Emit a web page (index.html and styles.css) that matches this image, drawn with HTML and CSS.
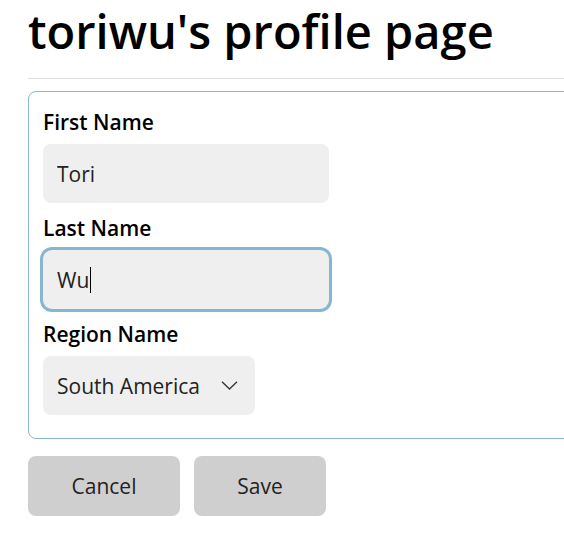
FILE: index.html
```html
<!DOCTYPE html>
<html lang="en">
<head>
<meta charset="utf-8">
<title>Profile</title>
<link rel="stylesheet" href="styles.css">
</head>
<body>
<main class="page">
  <h1 class="title">toriwu's profile page</h1>
  <hr class="rule">
  <form class="profile-form">
    <fieldset class="fields">
      <div class="group">
        <label class="label" for="first">First Name</label>
        <input class="field" id="first" type="text" value="Tori">
      </div>
      <div class="group">
        <label class="label" for="last">Last Name</label>
        <div class="field field-focus"><span>Wu</span><span class="caret"></span></div>
      </div>
      <div class="group">
        <label class="label" for="region">Region Name</label>
        <div class="select" id="region">
          <span>South America</span>
          <svg class="chev" width="17" height="9" viewBox="0 0 17 9"><path d="M1 0.8 L8.5 8 L16 0.8" fill="none" stroke="#333" stroke-width="1.3"/></svg>
        </div>
      </div>
    </fieldset>
    <div class="actions">
      <button type="button" class="btn btn-cancel">Cancel</button>
      <button type="button" class="btn btn-save">Save</button>
    </div>
  </form>
</main>
</body>
</html>
```
FILE: styles.css
```css
html, body {
  margin: 0;
  padding: 0;
  background: #fff;
  overflow: hidden;
}
body {
  font-family: "Open Sans", "Noto Sans", sans-serif;
  color: #111;
}
.page {
  width: 600px;
  padding: 0 0 0 28px;
}
.title {
  margin: 0;
  padding-top: 2px;
  font-size: 47px;
  font-weight: 600;
  line-height: 58px;
  color: #000;
  letter-spacing: 0;
}
.rule {
  margin: 18px 0 12px;
  border: 0;
  border-top: 1px solid #dcdcdc;
  width: 560px;
}
.profile-form {
  margin: 0;
}
.fields {
  margin: 0;
  border: 1px solid #8cb6cd;
  border-radius: 8px;
  padding: 17px 14px 23px;
  display: flex;
  flex-direction: column;
  gap: 12px;
  width: 560px;
  box-sizing: border-box;
}
.group {
  display: flex;
  flex-direction: column;
  gap: 8px;
}
.label {
  font-size: 21px;
  font-weight: 600;
  line-height: 27px;
  color: #000;
}
.field {
  box-sizing: border-box;
  width: 286px;
  height: 59px;
  border: 0;
  border-radius: 8px;
  background: #efefef;
  padding: 0 14px;
  font-family: inherit;
  font-size: 21px;
  color: #222;
  outline: none;
  display: flex;
  align-items: center;
}
.field-focus {
  box-shadow: 0 0 0 3px #86b6d0;
  border-radius: 9px;
}
.caret {
  display: inline-block;
  width: 1px;
  height: 26px;
  background: #000;
  margin-left: 1px;
}
.select {
  box-sizing: border-box;
  width: 212px;
  height: 59px;
  border-radius: 8px;
  background: #efefef;
  padding: 0 17px 0 14px;
  font-size: 21px;
  color: #222;
  display: flex;
  align-items: center;
  justify-content: space-between;
}
.chev {
  display: block;
}
.actions {
  display: flex;
  gap: 14px;
  margin-top: 17px;
}
.btn {
  height: 60px;
  border: 0;
  border-radius: 8px;
  background: #d0cfcf;
  font-family: inherit;
  font-size: 21px;
  color: #222;
  padding: 0;
}
.btn-cancel { width: 152px; }
.btn-save { width: 132px; }
```
